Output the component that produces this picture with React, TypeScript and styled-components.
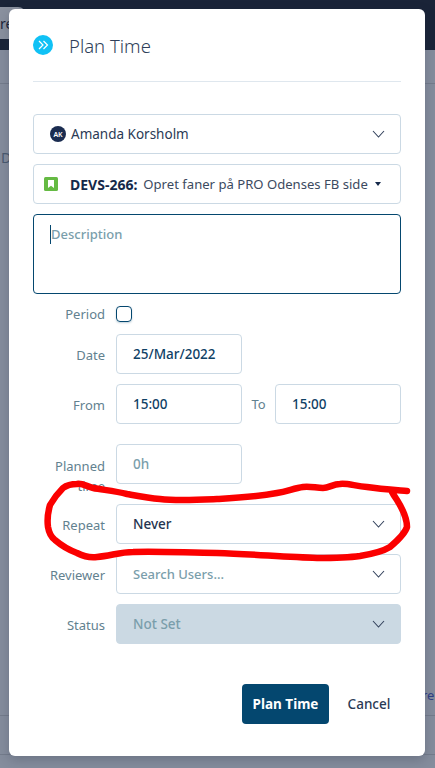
import React from "react";
import styled, { createGlobalStyle } from "styled-components";

const Global = createGlobalStyle`
  html, body { margin: 0; padding: 0; height: 100%; overflow: hidden; background: #858d9d; }
  body { font-family: "Noto Sans", "Open Sans", sans-serif; }
  * { box-sizing: border-box; }
`;

const Page = styled.div`
  position: relative; width: 435px; height: 768px; overflow: hidden; background: #858d9d;
  display: flex; flex-direction: column;
`;
const TopBar = styled.div`
  height: 39px; background: #1a2438; display: flex; align-items: flex-end; flex: none;
`;
const BrowserTab = styled.div`
  width: 26px; height: 32px; background: #8a919f; border-top-right-radius: 8px;
  color: #1a2438; font-size: 14px; line-height: 34px; overflow: hidden;
  white-space: nowrap; display: flex; justify-content: flex-start; padding-left: 0;
`;
const SubBar = styled.div` height: 11px; background: #1a2438; flex: none; `;
const HeaderBand = styled.div` height: 34px; background: #858d9d; border-bottom: 1px solid #747c8c; flex: none; `;
const BackText = styled.div`
  height: 631px; flex: none; color: #4a5a70; font-size: 14px; padding: 64px 0 0 1px; line-height: 20px;
  position: relative;
`;
const BackLine = styled.div` height: 1px; background: #747c8c; flex: none; `;
const BackSpacer = styled.div` height: 38px; flex: none; `;
const RightLink = styled.span`
  position: absolute; left: 422px; top: 685px;
  color: #2f3f86; font-size: 13px; line-height: 20px; white-space: nowrap;
`;

const Modal = styled.div`
  position: absolute; left: 9px; top: 9px; width: 416px; height: 747px; background: #fff;
  border-radius: 6px; padding: 26px 24px 0; display: flex; flex-direction: column;
  box-shadow: 0 4px 12px rgba(30, 40, 60, 0.25);
`;
const Header = styled.div`
  display: flex; align-items: center; gap: 16px; height: 20px; margin-bottom: 26px;
`;
const Title = styled.h2`
  margin: 0; font-size: 18.5px; font-weight: 300; color: #2f3f5a; line-height: 24px; padding-top: 2px;
`;
const Divider = styled.div` height: 1px; background: #dfe7ee; margin-bottom: 32px; flex: none; `;
const Form = styled.div` display: flex; flex-direction: column; gap: 10px; `;
const Field = styled.div<{ $disabled?: boolean; $pad?: number }>`
  height: 40px; min-width: 0; border: 1px solid #cbd9e4; border-radius: 4px;
  background: ${(p) => (p.$disabled ? "#cbd9e3" : "#fff")};
  display: flex; align-items: center; justify-content: space-between;
  padding: 0 15px 0 ${(p) => p.$pad ?? 16}px; font-size: 13.5px;
`;
const FixedField = styled(Field)` width: 126px; `;
const Person = styled.span` display: flex; align-items: center; gap: 5px; color: #2a3a55; font-size: 13.5px; `;
const Avatar = styled.span`
  width: 16px; height: 16px; border-radius: 50%; background: #1a2c50; color: #fff;
  font-size: 7px; font-weight: 600; display: flex; align-items: center; justify-content: center;
`;
const IssueRow = styled.span` display: flex; align-items: center; color: #3c4a60; white-space: nowrap; font-size: 13.1px; `;
const IssueIcon = styled.svg` margin-right: 12px; flex: none; `;
const IssueKey = styled.b` color: #15294a; font-weight: 700; margin-right: 6px; font-size: 14px; `;
const Caret = styled.span`
  width: 0; height: 0; border-left: 3.5px solid transparent; border-right: 3.5px solid transparent;
  border-top: 4px solid #15294a; margin-left: 7px; flex: none;
`;
const TextArea = styled.div`
  height: 80px; border: 1px solid #04476f; border-radius: 4px; padding: 10px 16px;
  color: #7a9eab; font-size: 13px; line-height: 19px; display: flex; font-weight: 500;
`;
const Cursor = styled.span` width: 1px; height: 19px; background: #04476f; flex: none; `;
const Row = styled.div<{ $h?: number; $spaced?: boolean }>`
  display: grid; grid-template-columns: 72px 1fr; column-gap: 11px; min-height: ${(p) => p.$h ?? 40}px; align-items: center;
  margin: ${(p) => (p.$spaced ? "10px 0" : "0")};
`;
const Label = styled.label`
  text-align: right; color: #62818f; font-size: 13px; line-height: 20px; padding-top: 2px;
`;
const PlainLabel = styled(Label)` padding-top: 0; `;
const TallLabel = styled(Label)` align-self: start; padding-top: 12px; height: 40px; `;
const Check = styled.span`
  width: 16px; height: 16px; border: 1px solid #04476f; border-radius: 4px; display: block;
  box-shadow: 0 1px 2px rgba(4, 71, 111, 0.25);
`;
const Value = styled.span<{ $tone: "blue" | "dark" | "muted"; $size?: number }>`
  color: ${(p) => (p.$tone === "blue" ? "#0f4165" : p.$tone === "dark" ? "#24344f" : "#7a9eab")};
  font-weight: 500; font-size: ${(p) => p.$size ?? 13.5}px;
`;
const TimePair = styled.div` display: grid; grid-template-columns: 126px 33px 126px; align-items: center; `;
const ToLabel = styled.span` text-align: center; color: #62818f; font-size: 13px; `;
const Footer = styled.div` display: flex; justify-content: flex-end; align-items: center; margin-top: 40px; `;
const Primary = styled.button`
  width: 87px; height: 40px; border: 0; border-radius: 4px; background: #04476f; color: #fff;
  font: 700 13.5px "Noto Sans", sans-serif; padding: 0;
`;
const Secondary = styled.button`
  width: 72px; height: 40px; border: 0; background: none; color: #2a3a55;
  font: 500 13.5px "Noto Sans", sans-serif; padding: 0 0 0 8px;
`;
const Ink = styled.svg` position: absolute; left: 0; top: 0; pointer-events: none; `;

const Chevron = () => (
  <svg width="13" height="8" viewBox="0 0 13 8" fill="none" stroke="#33425c" strokeWidth="1.1">
    <polyline points="1,1 6.5,7 12,1" />
  </svg>
);

export default function App() {
  return (
    <Page>
      <Global />
      <TopBar><BrowserTab>re</BrowserTab></TopBar>
      <SubBar />
      <HeaderBand />
      <BackText>D</BackText>
      <BackLine />
      <BackSpacer />
      <BackLine />
      <RightLink>re</RightLink>
      <Modal>
        <Header>
          <svg width="20" height="20" viewBox="0 0 20 20">
            <circle cx="10" cy="10" r="10" fill="#10c1f5" />
            <path d="M6 6l4 4-4 4M10.5 6l4 4-4 4" fill="none" stroke="#fff" strokeWidth="1.2" />
          </svg>
          <Title>Plan Time</Title>
        </Header>
        <Divider />
        <Form>
          <Field>
            <Person><Avatar>AK</Avatar>Amanda Korsholm</Person>
            <Chevron />
          </Field>
          <Field $pad={10}>
            <IssueRow>
              <IssueIcon width="14" height="14" viewBox="0 0 14 14">
                <rect width="14" height="14" rx="1.5" fill="#65ba43" />
                <path d="M4 3h6v8L7 8.8 4 11z" fill="#fff" />
              </IssueIcon>
              <IssueKey>DEVS-266:</IssueKey>Opret faner på PRO Odenses FB side<Caret />
            </IssueRow>
          </Field>
          <TextArea><Cursor />Description</TextArea>
          <Row $h={20}>
            <PlainLabel>Period</PlainLabel>
            <Check />
          </Row>
          <Row>
            <Label>Date</Label>
            <FixedField><Value $tone="blue">25/Mar/2022</Value></FixedField>
          </Row>
          <Row>
            <Label>From</Label>
            <TimePair>
              <Field><Value $tone="blue">15:00</Value></Field>
              <ToLabel>To</ToLabel>
              <Field><Value $tone="blue">15:00</Value></Field>
            </TimePair>
          </Row>
          <Row $spaced>
            <TallLabel>Planned time</TallLabel>
            <FixedField><Value $tone="muted">0h</Value></FixedField>
          </Row>
          <Row>
            <Label>Repeat</Label>
            <Field><Value $tone="dark">Never</Value><Chevron /></Field>
          </Row>
          <Row>
            <Label>Reviewer</Label>
            <Field><Value $tone="muted" $size={13}>Search Users...</Value><Chevron /></Field>
          </Row>
          <Row>
            <Label>Status</Label>
            <Field $disabled><Value $tone="muted">Not Set</Value><Chevron /></Field>
          </Row>
        </Form>
        <Footer>
          <Primary>Plan Time</Primary>
          <Secondary>Cancel</Secondary>
        </Footer>
      </Modal>
      <Ink width="435" height="768" viewBox="0 0 435 768" fill="none">
        <path
          d="M407 491C395 490 380 489 367 487C355 486 347 483 340 484C333 484 329 488 323 488C316 488 310 486 303 487C295 488 288 491 277 493C255 497 235 498 217 499C195 500 177 501 160 499C148 498 138 496 127 494C115 491 104 490 93 488C86 486 82 483 77 484C71 484 67 485 63 488C58 493 54 498 50 505C48 512 47 520 48 527C49 533 51 537 55 540C62 546 69 550 77 553C83 556 90 558 97 557C110 556 120 552 133 552C160 551 190 553 217 553C250 554 285 557 317 558C332 558 346 558 360 556C372 554 382 552 390 547C397 541 405 534 407 527C407 518 402 508 397 500C395 497 393 494 392 492"
          stroke="#fb0000"
          strokeWidth="6.5"
          strokeLinecap="round"
          strokeLinejoin="round"
        />
      </Ink>
    </Page>
  );
}
